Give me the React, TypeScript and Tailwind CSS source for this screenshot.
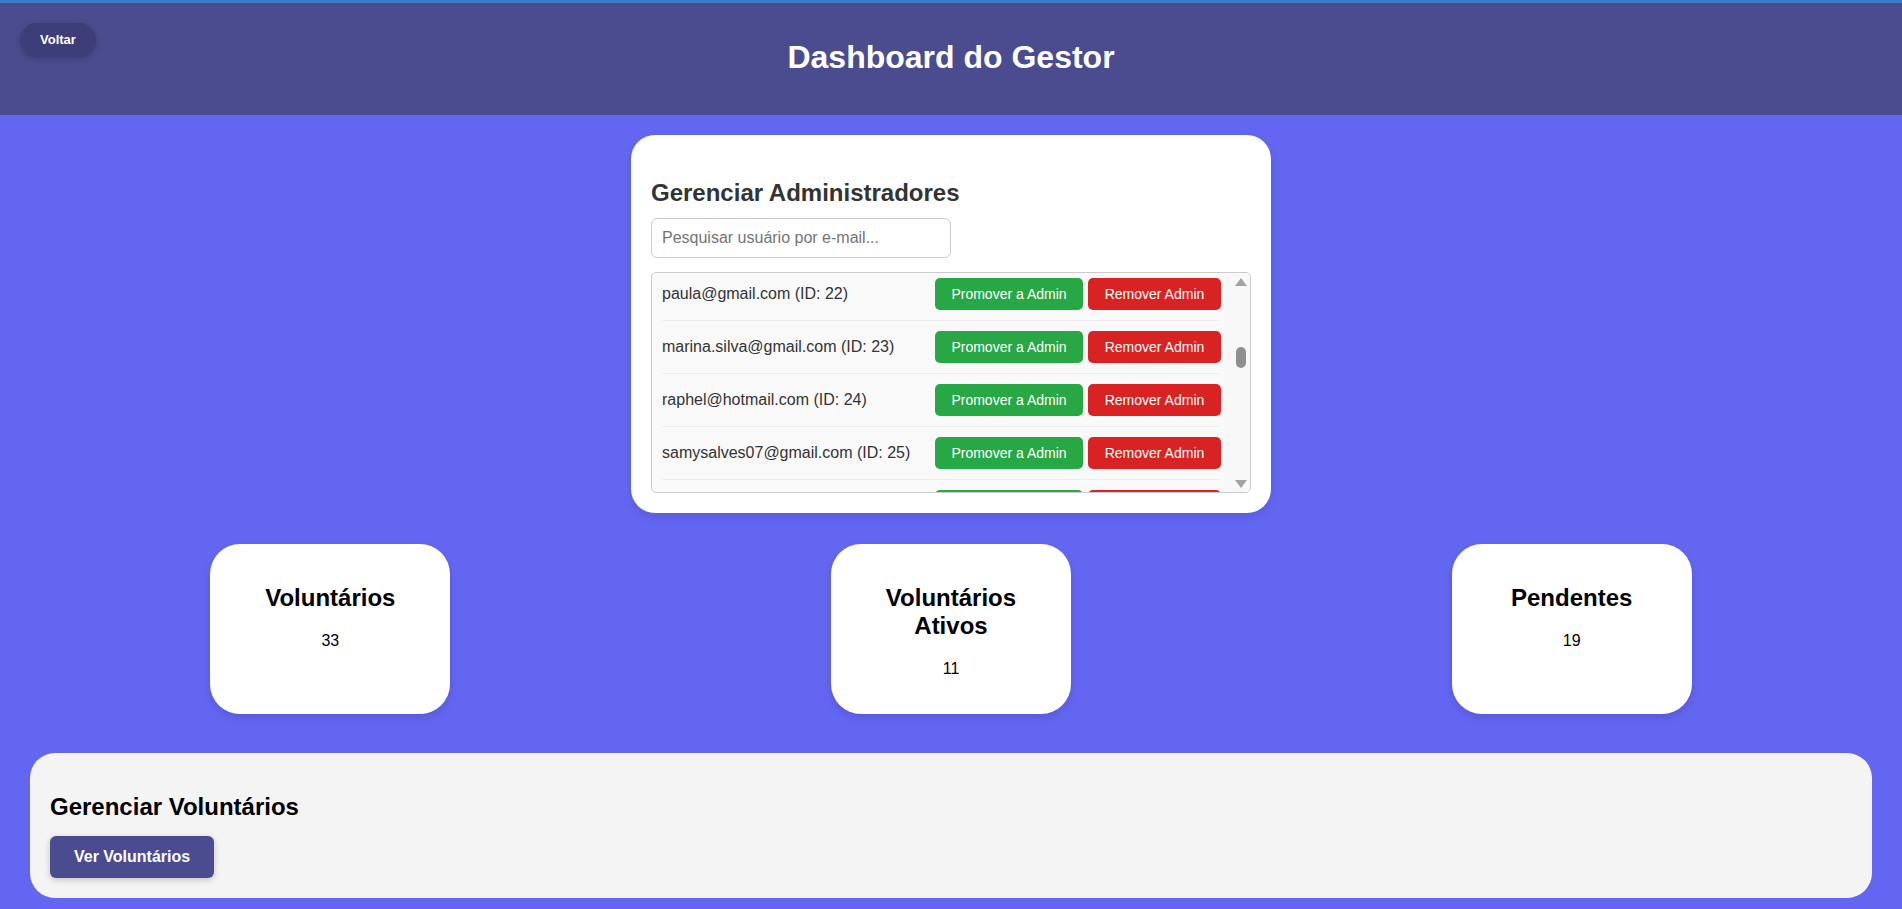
import React from 'react';

interface AdminUser {
  email: string;
  id: number;
}

const users: AdminUser[] = [
  { email: 'paula@gmail.com', id: 22 },
  { email: 'marina.silva@gmail.com', id: 23 },
  { email: 'raphel@hotmail.com', id: 24 },
  { email: 'samysalves07@gmail.com', id: 25 },
];

const stats = [
  { label: 'Voluntários', value: 33 },
  { label: 'Voluntários Ativos', value: 11 },
  { label: 'Pendentes', value: 19 },
];

const UserRow: React.FC<{ user?: AdminUser }> = ({ user }) => (
  <div className="flex items-center justify-between py-[10px] border-b border-[#eeeeee]">
    <span className="text-base text-[#333] leading-[normal]">
      {user ? `${user.email} (ID: ${user.id})` : ''}
    </span>
    <div className="flex gap-[5px]">
      <button className="h-8 w-[148px] rounded-[5px] bg-[#28a745] text-white text-sm leading-[normal]">
        {user ? 'Promover a Admin' : ''}
      </button>
      <button className="h-8 w-[133px] rounded-[5px] bg-[#d92323] text-white text-sm leading-[normal]">
        {user ? 'Remover Admin' : ''}
      </button>
    </div>
  </div>
);

// fake classic scrollbar, list is shown a bit scrolled down
const Scrollbar: React.FC = () => (
  <div className="w-[19px] flex flex-col items-center bg-[#f8f8f8]">
    <div className="h-[17px] flex items-center justify-center">
      <svg width="12" height="8" viewBox="0 0 12 8">
        <polygon points="6,0 12,8 0,8" fill="#a3a3a3" />
      </svg>
    </div>
    <div className="flex-1 pt-[57px]">
      <div className="w-[10px] h-[21px] rounded-full bg-[#8f8f8f]" />
    </div>
    <div className="h-[17px] flex items-center justify-center">
      <svg width="12" height="8" viewBox="0 0 12 8">
        <polygon points="0,0 12,0 6,8" fill="#a3a3a3" />
      </svg>
    </div>
  </div>
);

const StatCard: React.FC<{ label: string; value: number }> = ({ label, value }) => (
  <div className="w-[240px] p-5 rounded-[30px] bg-white text-center shadow-[0_4px_8px_rgba(0,0,0,0.12)]">
    <h2 className="my-5 text-[24px] font-bold leading-[normal] text-black">{label}</h2>
    <p className="my-4 text-base leading-[normal] text-black">{value}</p>
  </div>
);

export default function App() {
  return (
    <div className="min-h-screen bg-[#6366f1] font-['Liberation_Sans',Arial,sans-serif]">
      <header className="grid grid-cols-[1fr_auto_1fr] items-center h-[115px] pb-1 px-5 bg-[#4b4c8f] border-t-[3px] border-[#3b7ac4]">
        <div className="self-start pt-5">
          <button className="h-[34px] px-5 rounded-full bg-[#3d3d77] text-white text-[13px] font-bold shadow-[0_2px_6px_rgba(0,0,0,0.2)]">
            Voltar
          </button>
        </div>
        <h1 className="text-[32px] font-bold text-white leading-[normal]">Dashboard do Gestor</h1>
        <div />
      </header>

      <main className="px-5 pt-5 pb-[10px]">
        <section className="mx-auto w-[640px] pt-6 px-5 pb-5 rounded-[24px] bg-white shadow-[0_4px_10px_rgba(0,0,0,0.1)]">
          <h2 className="mt-5 mb-[11px] text-[24px] font-bold leading-[normal] text-[#333]">
            Gerenciar Administradores
          </h2>
          <input
            type="text"
            placeholder="Pesquisar usuário por e-mail..."
            className="block w-[300px] h-10 mb-[14px] px-[10px] rounded-[6px] border border-[#cccccc] text-base text-[#333] placeholder:text-[#757575] outline-none"
          />
          <div className="flex h-[221px] rounded-[5px] border border-[#cccccc] bg-[#f9f9f9] overflow-hidden">
            <div className="flex-1 overflow-hidden px-[10px]">
              <div className="-mt-[5px]">
                {users.map((u) => (
                  <UserRow key={u.id} user={u} />
                ))}
                <UserRow />
              </div>
            </div>
            <Scrollbar />
          </div>
        </section>

        <div className="flex justify-around items-stretch mt-[31px]">
          {stats.map((s) => (
            <StatCard key={s.label} label={s.label} value={s.value} />
          ))}
        </div>

        <section className="mx-[10px] mt-[39px] p-5 rounded-[25px] bg-[#f4f4f4]">
          <h2 className="mt-5 mb-[15px] text-[24px] font-bold leading-[normal] text-black">
            Gerenciar Voluntários
          </h2>
          <button className="h-[42px] px-6 rounded-[6px] bg-[#4b4c8f] text-white text-base font-bold shadow-[0_2px_6px_rgba(0,0,0,0.2)]">
            Ver Voluntários
          </button>
        </section>
      </main>
    </div>
  );
}
